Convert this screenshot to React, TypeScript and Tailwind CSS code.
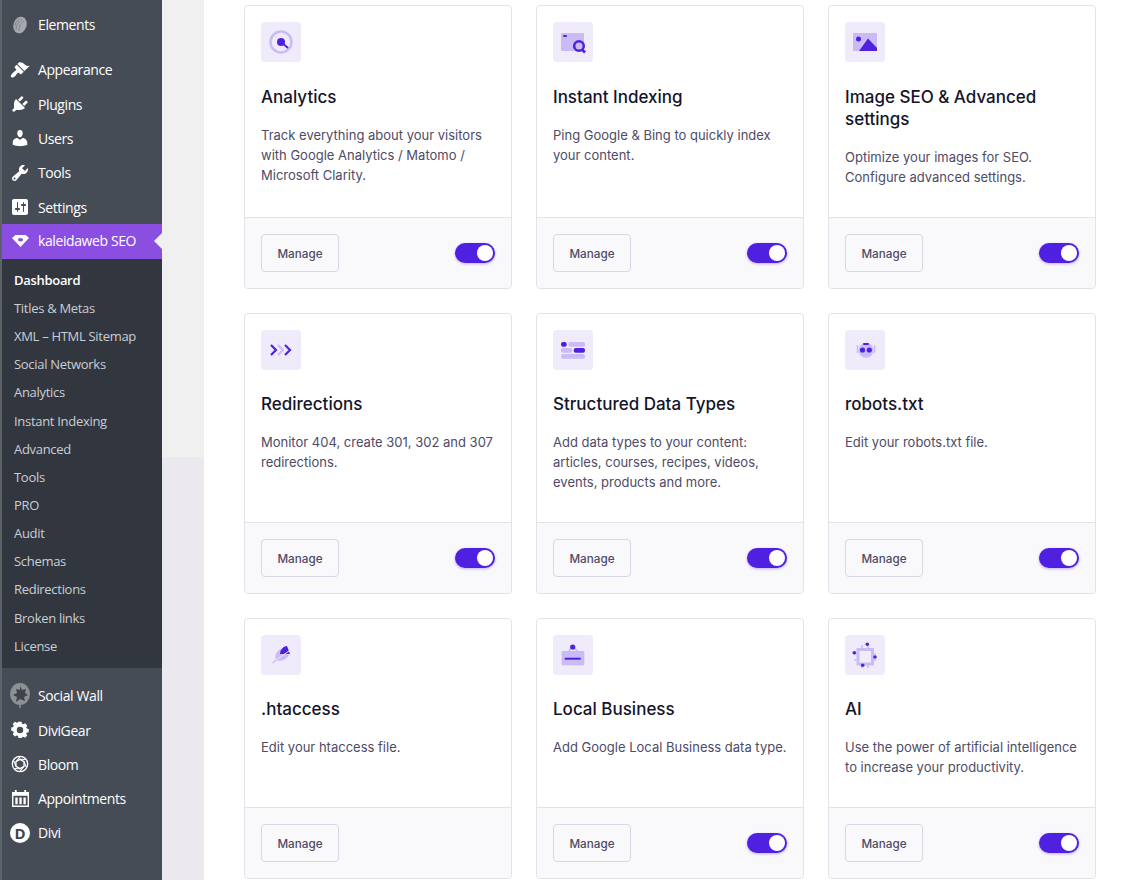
import { ReactNode } from "react";

const L = "#c9bcf6";
const D = "#5020e0";

const Wp = ({ d }: { d: string }) => (
  <svg viewBox="0 0 20 20" className="w-5 h-5" fill="#fff">
    <path d={d} />
  </svg>
);

const ElementsIcon = () => (
  <svg viewBox="0 0 20 20" className="w-5 h-5">
    <ellipse cx="10" cy="10" rx="6.500" ry="8.500" transform="rotate(18 10 10)" fill="#a5a9ae" />
    <path d="M6 15c0-4 2-8 6-11M9 16c0-4 1-7 5-10M5 11c0-3 2-5 4-7" stroke="#767b82" strokeWidth=".8" fill="none" />
  </svg>
);

const AppearanceIcon = () => (
  <Wp d="M14.48 11.06L7.41 3.99l1.5-1.5c.5-.56 2.3-.47 3.51.32 1.21.8 1.43 1.28 2.91 2.1 1.18.64 2.45 1.26 4.45.85zm-.71.71L6.7 4.7 4.93 6.47c-.39.39-.39 1.02 0 1.41l1.06 1.06c.39.39.39 1.03 0 1.42-.6.6-1.43 1.11-2.21 1.69-.35.26-.7.53-1.01.84-1.43 1.43-2.4 3.18-1.79 4.21.5.85 2.6.6 4.07-.87.31-.31.58-.66.84-1.01.58-.78 1.09-1.61 1.69-2.21.39-.39 1.03-.39 1.42 0l1.06 1.06c.39.39 1.02.39 1.41 0z" />
);

const SocialIcon = () => (
  <svg viewBox="0 0 20 25" className="w-5 h-[25px]">
    <ellipse cx="10" cy="11" rx="10" ry="11" fill="#8d9094" />
    <path d="M10 3l2 4 4-1-1 4 3 2-4 2 1 4-5-2-4 3 1-5-4-2 4-2-1-4 4 1z" fill="#3f444c" />
    <path d="M10 22v3" stroke="#8d9094" strokeWidth="1.5" />
  </svg>
);

const GearIcon = () => (
  <svg viewBox="0 0 20 20" className="w-[18px] h-[18px]" fill="#fff">
    <path
      fillRule="evenodd"
      d="M8 1h4l.5 2.4 1.6.7 2.1-1.3 2.8 2.8-1.3 2.1.7 1.6 2.4.5v4l-2.4.5-.7 1.6 1.3 2.1-2.8 2.8-2.1-1.3-1.6.7L12 21H8l-.5-2.4-1.6-.7-2.1 1.3L1 16.4l1.3-2.1-.7-1.6L-.8 12V8l2.4-.5.7-1.6L1 3.8 3.8 1l2.1 1.3 1.6-.7zM10 7a4 4 0 100 8 4 4 0 000-8z"
      transform="translate(1 0) scale(.9)"
    />
  </svg>
);

const BloomIcon = () => (
  <svg viewBox="0 0 20 20" className="w-[18px] h-[18px]" fill="none" stroke="#fff" strokeWidth="1.500">
    <circle cx="10" cy="10" r="8.500" />
    <path d="M10 4.800l4.500 2.600v5.200L10 15.200l-4.500-2.600V7.400z" />
    <path d="M10 4.800L16.500 5M14.500 7.400L17 13.500M14.500 12.600L10 18M10 15.200L3.500 15M5.500 12.600L3 6.500M5.500 7.400L10 2" strokeWidth="1.200" />
  </svg>
);

const CalendarIcon = () => (
  <svg viewBox="0 0 18 18" className="w-[17px] h-[17px]" fill="#fff">
    <path
      fillRule="evenodd"
      d="M3 0h2v2h8V0h2v2h3v16H0V2h3zM1.500 6v10.500h15V6zM3.500 8h2.500v7H3.500zm4.300 0h2.500v7H7.800zm4.300 0h2.500v7h-2.500z"
    />
  </svg>
);

const menuTop: [string, ReactNode][] = [
  [
    "Plugins",
    <Wp d="M13.11 4.36L9.87 7.6 8 5.73l3.24-3.24c.35-.34 1.05-.2 1.56.32.52.51.66 1.21.31 1.55zm-8 1.77l.91-1.12 9.01 9.01-1.19.84c-.71.71-2.63 1.16-3.82 1.16H6.14L4.9 17.26c-.59.59-1.54.59-2.12 0-.59-.58-.59-1.53 0-2.12l1.24-1.24v-3.88c0-1.13.4-3.19 1.09-3.89zm7.26 3.97l3.24-3.24c.34-.35 1.04-.21 1.55.31.52.51.66 1.21.31 1.55l-3.24 3.25z" />,
  ],
  [
    "Users",
    <Wp d="M10 9.25c-2.27 0-2.73-3.44-2.73-3.44C7 4.02 7.82 2 9.97 2c2.16 0 2.98 2.02 2.71 3.81 0 0-.41 3.44-2.68 3.44zm0 2.57L12.72 10c2.39 0 4.52 2.33 4.52 4.53v2.49s-3.65 1.13-7.24 1.13c-3.65 0-7.24-1.13-7.24-1.13v-2.49c0-2.25 1.94-4.48 4.47-4.48z" />,
  ],
  [
    "Tools",
    <Wp d="M16.68 9.77c-1.34 1.34-3.3 1.67-4.95.99l-5.41 6.52c-.99.99-2.59.99-3.58 0s-.99-2.59 0-3.57l6.52-5.42c-.68-1.65-.35-3.61.99-4.95 1.28-1.28 3.12-1.62 4.72-1.06l-2.89 2.89 2.82 2.82 2.86-2.87c.53 1.58.18 3.39-1.08 4.65zM3.81 16.21c.4.39 1.04.39 1.43 0 .4-.4.4-1.04 0-1.43-.39-.4-1.03-.4-1.43 0-.39.39-.39 1.03 0 1.43z" />,
  ],
  [
    "Settings",
    <Wp d="M18 16V4c0-1.1-.9-2-2-2H4c-1.1 0-2 .9-2 2v12c0 1.1.9 2 2 2h12c1.1 0 2-.9 2-2zM8 11h1c.55 0 1 .45 1 1s-.45 1-1 1H8v1.5c0 .28-.22.5-.5.5s-.5-.22-.5-.5V13H6c-.55 0-1-.45-1-1s.45-1 1-1h1V5.5c0-.28.22-.5.5-.5s.5.22.5.5V11zm5-2h-1c-.55 0-1-.45-1-1s.45-1 1-1h1V5.5c0-.28.22-.5.5-.5s.5.22.5.5V7h1c.55 0 1 .45 1 1s-.45 1-1 1h-1v5.5c0 .28-.22.5-.5.5s-.5-.22-.5-.5V9z" />,
  ],
];

const submenu = [
  "Titles & Metas",
  "XML – HTML Sitemap",
  "Social Networks",
  "Analytics",
  "Instant Indexing",
  "Advanced",
  "Tools",
  "PRO",
  "Audit",
  "Schemas",
  "Redirections",
  "Broken links",
  "License",
];

const MenuRow = ({ icon, label }: { icon: ReactNode; label: string }) => (
  <div className="flex items-center h-[34.3px] text-white text-[14px] tracking-[-0.4px]">
    <div className="w-9 flex justify-center items-center shrink-0">{icon}</div>
    <span>{label}</span>
  </div>
);

const Sidebar = () => (
  <div className="w-[162px] h-full shrink-0 bg-[#454c56] border-l-2 border-[#5d6269] pt-[7.4px] font-['Open_Sans','Noto_Sans',sans-serif]">
    <MenuRow icon={<ElementsIcon />} label="Elements" />
    <div className="h-[11px]" />
    <MenuRow icon={<AppearanceIcon />} label="Appearance" />
    {menuTop.map(([label, icon]) => (
      <MenuRow key={label} icon={icon} label={label} />
    ))}
    <div className="relative flex items-center h-[35px] pb-[2px] bg-[#8a4fe0] text-white text-[14px] tracking-[-0.4px]">
      <div className="w-9 flex justify-center shrink-0">
        <svg viewBox="0 0 20 14" className="w-[17px] h-3">
          <path d="M0 3.5L4 0h12l4 3.5L10 14z" fill="#fff" />
          <ellipse cx="10" cy="5.5" rx="3" ry="2" fill="#8a4fe0" />
        </svg>
      </div>
      <span>kaleidaweb SEO</span>
      <div className="absolute right-0 top-[9px] border-y-[8px] border-r-[8px] border-y-transparent border-r-[#f0f0f1]" />
    </div>
    <div className="bg-[#32373f] pt-[7.4px] pb-[7.5px] text-[13px] tracking-[-0.3px] text-[#c9ced6]">
      <div className="flex items-center h-[28.15px] pl-3 text-white font-semibold">Dashboard</div>
      {submenu.map((s) => (
        <div key={s} className="flex items-center h-[28.15px] pl-3">
          {s}
        </div>
      ))}
    </div>
    <div className="h-[10.6px]" />
    <MenuRow icon={<SocialIcon />} label="Social Wall" />
    <MenuRow icon={<GearIcon />} label="DiviGear" />
    <MenuRow icon={<BloomIcon />} label="Bloom" />
    <MenuRow icon={<CalendarIcon />} label="Appointments" />
    <MenuRow
      icon={
        <div className="w-5 h-5 rounded-full bg-white text-[#3f444c] flex items-center justify-center text-[15px] font-bold tracking-normal">
          D
        </div>
      }
      label="Divi"
    />
  </div>
);

const box = (children: ReactNode) => (
  <svg viewBox="0 0 24 24" className="w-6 h-6 overflow-visible">
    {children}
  </svg>
);

const icons: Record<string, ReactNode> = {
  analytics: box(
    <>
      <circle cx="12" cy="12" r="10.500" fill="none" stroke={L} strokeWidth="2.500" />
      <circle cx="12" cy="12" r="4" fill={D} />
      <path d="M12 12l7 6" stroke={D} strokeWidth="2" />
    </>
  ),
  indexing: box(
    <>
      <rect x="0" y="3" width="23" height="18" rx="1" fill={L} />
      <rect x="2" y="5" width="4" height="2" rx="1" fill={D} />
      <circle cx="18" cy="16" r="4.800" fill={L} stroke={D} strokeWidth="2.500" />
      <path d="M21 19.500l3 3" stroke={D} strokeWidth="2.600" />
    </>
  ),
  image: box(
    <>
      <rect x="0" y="3" width="24" height="18" rx="1" fill={L} />
      <circle cx="5.500" cy="9" r="2.500" fill={D} />
      <path d="M6 21L15 8.500 24 18v3z" fill={D} />
    </>
  ),
  redirect: box(
    <>
      <path d="M2 7l5 5-5 5" fill="none" stroke={D} strokeWidth="2.200" />
      <path d="M9 7l5 5-5 5" fill="none" stroke={L} strokeWidth="2.200" />
      <path d="M16 7l5 5-5 5" fill="none" stroke={D} strokeWidth="2.200" />
    </>
  ),
  data: box(
    <>
      <rect x="0" y="4" width="5.700" height="4.700" rx="2" fill={D} />
      <rect x="7.300" y="4" width="16.700" height="4.700" rx="2" fill={L} />
      <rect x="0" y="10" width="11.300" height="4.700" rx="2" fill={L} />
      <rect x="12.700" y="10" width="11.300" height="4.700" rx="2" fill={D} />
      <rect x="0" y="16" width="24" height="4.700" rx="2" fill={L} />
    </>
  ),
  robots: box(
    <>
      <path d="M4.500 7v8M21.500 7v8" stroke={L} strokeWidth="1.600" />
      <ellipse cx="13" cy="12.200" rx="7.500" ry="7.500" fill={L} />
      <rect x="10" y="5" width="6" height="2" rx="1" fill={D} />
      <circle cx="9.500" cy="12" r="2.600" fill={D} />
      <circle cx="16.300" cy="12" r="2.600" fill={D} />
    </>
  ),
  htaccess: box(
    <>
      <path d="M7 17C5 12 8 8 12 6l1 4 7 2c-3 5-8 7-13 5z" fill={L} />
      <path d="M3.700 20L12 13" stroke={L} strokeWidth="1.500" />
      <path d="M11 11c0-5 4-8 7-8l3 8z" fill={D} />
      <path d="M7 17L20 8" stroke="#efebfb" strokeWidth="1" />
    </>
  ),
  business: box(
    <>
      <path d="M7 9l3-3.500h4L17 9" fill="none" stroke={L} strokeWidth="1.500" />
      <circle cx="11.700" cy="4" r="2.600" fill={D} />
      <rect x=".7" y="8" width="22.600" height="14.300" rx="1" fill={L} />
      <rect x="3.700" y="14.700" width="16" height="2" fill={D} />
    </>
  ),
  ai: box(
    <>
      <rect x="5" y="6.500" width="14.500" height="14.500" fill="#f0ecfb" stroke={L} strokeWidth="3" />
      <path d="M1 11h3M1 17h3M20 11h3M20 17h3M9 2v3M15 2v3M9 22v3M15 22v3" stroke={L} strokeWidth="1.500" />
      <circle cx="1.300" cy="9.700" r="1.800" fill={D} />
      <circle cx="22" cy="14" r="1.800" fill={D} />
      <circle cx="14.300" cy="1.300" r="1.800" fill={D} />
      <circle cx="9.700" cy="22.300" r="1.800" fill={D} />
    </>
  ),
};

const cards = [
  { icon: "analytics", title: "Analytics", text: "Track everything about your visitors with Google Analytics / Matomo / Microsoft Clarity.", toggle: true },
  { icon: "indexing", title: "Instant Indexing", text: "Ping Google & Bing to quickly index your content.", toggle: true },
  { icon: "image", title: "Image SEO & Advanced settings", text: "Optimize your images for SEO. Configure advanced settings.", toggle: true },
  { icon: "redirect", title: "Redirections", text: "Monitor 404, create 301, 302 and 307 redirections.", toggle: true },
  { icon: "data", title: "Structured Data Types", text: "Add data types to your content: articles, courses, recipes, videos, events, products and more.", toggle: true },
  { icon: "robots", title: "robots.txt", text: "Edit your robots.txt file.", toggle: true },
  { icon: "htaccess", title: ".htaccess", text: "Edit your htaccess file.", toggle: false },
  { icon: "business", title: "Local Business", text: "Add Google Local Business data type.", toggle: true },
  { icon: "ai", title: "AI", text: "Use the power of artificial intelligence to increase your productivity.", toggle: true },
];

const Toggle = () => (
  <div className="w-10 h-5 rounded-full bg-[#5020e0] flex items-center justify-end pr-0.5 shadow-[0_1px_3px_rgba(80,32,224,0.35)]">
    <div className="w-4 h-4 rounded-full bg-white" />
  </div>
);

const Card = ({ icon, title, text, toggle }: (typeof cards)[number]) => (
  <div className="flex flex-col border border-[#e4e2e9] rounded bg-white">
    <div className="flex-1 px-4 pt-4 pb-[29.8px]">
      <div className="w-10 h-10 rounded bg-[#efebfb] flex items-center justify-center">{icons[icon]}</div>
      <h3 className="mt-[23.15px] text-[17px] leading-[22.5px] font-medium text-[#14142b]">{title}</h3>
      <p className="mt-[16.55px] text-[13px] leading-5 text-[#4e4b66]">{text}</p>
    </div>
    <div className="flex items-center justify-between h-[71px] px-4 border-t border-[#e4e2e9] bg-[#f9f9fb] rounded-b">
      <button className="w-[78px] h-[38px] pt-[3px] rounded border border-[#d9d6e6] text-[11.7px] font-medium text-[#4e4b66]">
        Manage
      </button>
      {toggle && <Toggle />}
    </div>
  </div>
);

export default function App() {
  return (
    <div className="flex h-[880px] w-[1134px] overflow-hidden bg-white">
      <Sidebar />
      <div className="w-[42px] shrink-0 flex flex-col">
        <div className="h-[457px] bg-[#f0f0f1]" />
        <div className="flex-1 bg-[#ebe9ed]" />
      </div>
      <div className="flex-1 pl-10 pt-[5.4px] font-['Inter',sans-serif]">
        <div className="grid grid-cols-[repeat(3,268px)] gap-6">
          {cards.map((c) => (
            <Card key={c.title} {...c} />
          ))}
        </div>
      </div>
    </div>
  );
}
